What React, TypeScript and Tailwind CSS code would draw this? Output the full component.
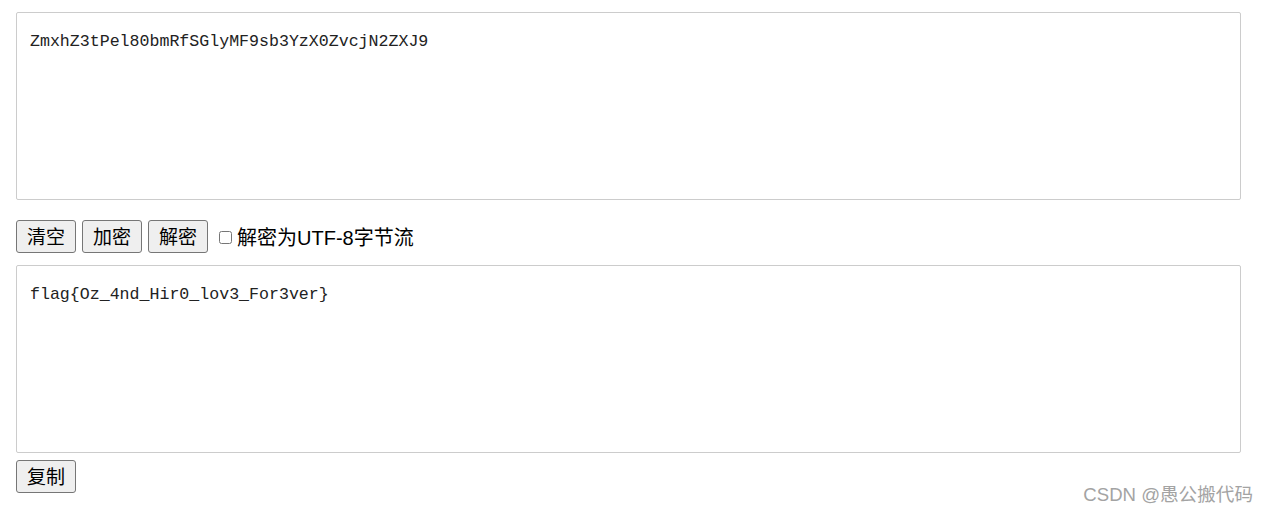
const mono = "font-['Liberation_Mono',monospace]";
const cjk = "font-['Liberation_Sans','Noto_Sans_CJK_SC',sans-serif]";

function Btn({ label }: { label: string }) {
  return (
    <button
      type="button"
      className={`${cjk} h-[33px] w-[60px] rounded-[3px] border border-[#767676] bg-[#efefef] pt-[2px] text-[19px] leading-none text-black`}
    >
      {label}
    </button>
  );
}

export default function App() {
  return (
    <div className="relative h-[515px] w-[1268px] bg-white">
      <div className="flex flex-col pl-4 pt-3 pr-[27px]">
        <textarea
          readOnly
          defaultValue="ZmxhZ3tPel80bmRfSGlyMF9sb3YzX0ZvcjN2ZXJ9"
          className={`${mono} h-[188px] w-full resize-none rounded-[2px] border border-[#cccccc] px-[13px] pt-[19px] text-[16.6px] leading-[20px] text-[#222] outline-none`}
        />
        <div className="mt-5 flex items-center gap-1.5">
          <Btn label="清空" />
          <Btn label="加密" />
          <Btn label="解密" />
          <label className={`${cjk} ml-[5px] flex items-center pt-[2px] text-[20px] leading-none text-black`}>
            <input type="checkbox" className="mr-[5px] h-[13px] w-[13px]" />
            解密为UTF-8字节流
          </label>
        </div>
        <textarea
          readOnly
          defaultValue="flag{Oz_4nd_Hir0_lov3_For3ver}"
          className={`${mono} mt-3 h-[188px] w-full resize-none rounded-[2px] border border-[#cccccc] px-[13px] pt-[19px] text-[16.6px] leading-[20px] text-[#222] outline-none`}
        />
        <div className="mt-[7px] flex">
          <Btn label="复制" />
        </div>
      </div>
      <div className={`${cjk} absolute bottom-[6px] right-[15px] text-[18.6px] text-[#a3a3a3]`}>
        CSDN @愚公搬代码
      </div>
    </div>
  );
}
